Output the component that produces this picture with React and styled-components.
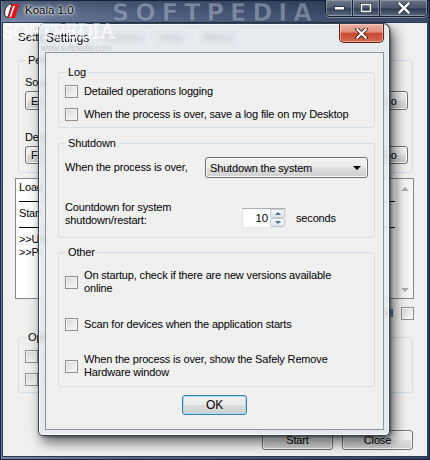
import React from "react";
import styled, { createGlobalStyle } from "styled-components";

const GlobalStyle = createGlobalStyle`
  html, body {
    margin: 0;
    padding: 0;
  }
  body {
    width: 430px;
    height: 460px;
    overflow: hidden;
    background: #1d2a40;
    font-family: "Liberation Sans", Arial, sans-serif;
    font-size: 11px;
    letter-spacing: -0.16px;
    color: #000;
  }
`;

const Desktop = styled.div`
  position: relative;
  width: 430px;
  height: 460px;
  overflow: hidden;
`;

/* ---------- main (background) window ---------- */

const MainWindow = styled.div`
  width: 430px;
  height: 460px;
  box-sizing: border-box;
  display: flex;
  flex-direction: column;
  border: 1px solid #16213a;
  padding: 0 1px 2px 1px;
  background: linear-gradient(90deg, #72829f 0%, #56678a 30%, #3f5072 70%, #31405c 100%);
`;

const TitleBar = styled.div`
  height: 21px;
  display: flex;
  align-items: flex-start;
  position: relative;
  background: linear-gradient(180deg, rgba(20, 30, 50, 0.35) 0%, rgba(255, 255, 255, 0.05) 100%);
`;

const AppIcon = styled.svg`
  width: 18px;
  height: 18px;
  margin: 1px 0 0 1px;
  flex-shrink: 0;
`;

const TitleText = styled.span`
  font-size: 11.5px;
  letter-spacing: 0;
  line-height: 18px;
  margin-left: 4px;
  color: #000;
  text-shadow: 0 0 6px #fff, 0 0 3px #fff, 0 0 2px #fff;
`;

const CaptionGroup = styled.div`
  margin-left: auto;
  margin-top: -1px;
  display: flex;
  height: 16px;
  border: 1px solid rgba(20, 28, 45, 0.9);
  border-top: none;
  border-radius: 0 0 5px 5px;
  overflow: hidden;
  box-shadow: 0 1px 0 rgba(255, 255, 255, 0.35);
  z-index: 1;
`;

const CaptionBtn = styled.div`
  width: ${(p) => p.$w}px;
  display: flex;
  align-items: center;
  justify-content: center;
  background: linear-gradient(180deg, rgba(255, 255, 255, 0.32) 0%, rgba(255, 255, 255, 0.12) 50%, rgba(0, 0, 0, 0.08) 55%, rgba(255, 255, 255, 0.18) 100%);
  box-shadow: inset 0 0 0 1px rgba(255, 255, 255, 0.3);
  & + & {
    border-left: 1px solid rgba(20, 28, 45, 0.9);
  }
`;

const Client = styled.div`
  flex: 1;
  display: flex;
  flex-direction: column;
  background: #f0f0f0;
  border: 1px solid #2a3a57;
  min-height: 0;
`;

const MenuBar = styled.div`
  height: 28px;
  display: flex;
  align-items: center;
  padding-left: 15px;
  font-size: 11.5px;
  letter-spacing: 0;
`;

const MenuItem = styled.span`
  margin-left: ${(p) => p.$ml || 0}px;
`;

const Content = styled.div`
  display: flex;
  flex-direction: column;
  padding: 0 13px 0 12px;
`;

const Group = styled.fieldset`
  margin: ${(p) => p.$mt || 0}px ${(p) => (p.$inset ? "1px" : "8px")} 0 ${(p) => (p.$inset ? "3px" : "12px")};
  padding: 0 ${(p) => p.$pr || 6}px 0 6px;
  height: ${(p) => p.$h}px;
  box-sizing: border-box;
  border: 1px solid #d5dfe5;
  border-radius: 3px;
  min-width: 0;
  display: flex;
  flex-direction: column;
`;

const Legend = styled.legend`
  padding: 0 2px;
  margin-left: 1px;
  font-size: 11px;
  line-height: 12px;
  color: #000;
`;

const FieldLabel = styled.div`
  line-height: 12px;
  margin-top: ${(p) => p.$mt}px;
  white-space: nowrap;
`;

const PathRow = styled.div`
  display: flex;
  gap: 7px;
  margin-top: 3px;
`;

const WinButton = styled.div`
  box-sizing: border-box;
  height: ${(p) => p.$h || 20}px;
  width: ${(p) => (p.$w ? `${p.$w}px` : "auto")};
  flex: ${(p) => (p.$grow ? 1 : "none")};
  display: flex;
  align-items: center;
  justify-content: ${(p) => (p.$left ? "flex-start" : "center")};
  padding: 0 5px;
  border: 1px solid ${(p) => (p.$default ? "#3c7fb1" : "#707070")};
  border-radius: 3px;
  background: linear-gradient(180deg, #f2f2f2 0%, #ebebeb 48%, #dddddd 52%, #cfcfcf 100%);
  box-shadow: inset 0 0 0 1px ${(p) => (p.$default ? "#a6dcf7" : "#fbfbfb")};
  font-size: ${(p) => p.$fs || 11}px;
  white-space: nowrap;
  overflow: hidden;
`;

const ListBox = styled.div`
  margin-top: 5px;
  height: 121px;
  box-sizing: border-box;
  border: 1px solid #828790;
  background: #fff;
  display: flex;
`;

const ListLines = styled.div`
  flex: 1;
  padding: 2px 0 0 3px;
  display: flex;
  flex-direction: column;
`;

const ListLine = styled.div`
  height: 13px;
  line-height: 13px;
  white-space: nowrap;
`;

const ListRule = styled.div`
  height: 7px;
  border-bottom: 1px solid #000;
  margin-bottom: 5px;
`;

const ScrollBar = styled.div`
  width: 17px;
  display: flex;
  flex-direction: column;
  justify-content: space-between;
  align-items: center;
  padding: 8px 0 6px;
  background: linear-gradient(90deg, #e3e3e3 0%, #f3f3f3 40%, #f6f6f6 100%);
  border-left: 1px solid #ececec;
`;

const ScrollArrow = styled.div`
  width: 0;
  height: 0;
  border-left: 4px solid transparent;
  border-right: 4px solid transparent;
  ${(p) => (p.$down ? "border-top: 4px solid #a9a9a9;" : "border-bottom: 4px solid #a9a9a9;")}
`;

const CheckRow = styled.label`
  display: flex;
  align-items: center;
  gap: ${(p) => p.$gap || 6}px;
  margin-top: ${(p) => p.$mt || 0}px;
  align-self: ${(p) => (p.$end ? "flex-end" : "stretch")};
  line-height: 13px;
`;

const Check = styled.span`
  width: 13px;
  height: 13px;
  box-sizing: border-box;
  flex-shrink: 0;
  border: 1px solid #8e8f8f;
  background: linear-gradient(135deg, #d6d6d6 0%, #e9e9e9 50%, #fbfbfb 100%);
  box-shadow: inset 0 0 0 1px #f4f4f4;
`;

const BottomButtons = styled.div`
  display: flex;
  justify-content: flex-end;
  gap: 9px;
  margin: 37px 1px 0 0;
`;

/* ---------- Settings dialog ---------- */

const Dialog = styled.div`
  position: absolute;
  left: 38px;
  top: 23px;
  width: 352px;
  height: 413px;
  box-sizing: border-box;
  display: flex;
  flex-direction: column;
  border: 1px solid rgba(35, 45, 62, 0.9);
  border-radius: 7px 7px 5px 5px;
  background: rgba(228, 232, 238, 0.82);
  backdrop-filter: blur(2.5px);
  box-shadow: inset 0 0 0 1px rgba(255, 255, 255, 0.75), 4px 6px 13px rgba(0, 0, 0, 0.62), 1px 1px 3px rgba(0, 0, 0, 0.4);
`;

const DialogTitleRow = styled.div`
  height: 28px;
  display: flex;
  align-items: flex-start;
`;

const DialogTitle = styled.span`
  margin: 7px 0 0 7px;
  font-size: 12px;
  letter-spacing: 0;
  line-height: 14px;
  text-shadow: 0 0 5px rgba(255, 255, 255, 0.9);
`;

const RedClose = styled.div`
  margin: 0 5px 0 auto;
  width: 45px;
  height: 19px;
  box-sizing: border-box;
  display: flex;
  align-items: center;
  justify-content: center;
  border: 1px solid #5e2219;
  border-top: none;
  border-radius: 0 0 5px 5px;
  background: linear-gradient(180deg, #eab0a1 0%, #df8f7b 45%, #c9472f 52%, #d26a52 100%);
  box-shadow: inset 0 0 0 1px rgba(255, 240, 235, 0.45);
`;

const DialogClient = styled.div`
  flex: 1;
  margin: 0 5px 5px 6px;
  background: #f0f0f0;
  border: 1px solid #8d949d;
  display: flex;
  flex-direction: column;
  padding-top: 13px;
`;

const ShutRow = styled.div`
  display: flex;
  align-items: ${(p) => p.$align || "center"};
  margin-top: ${(p) => p.$mt || 0}px;
`;

const RowText = styled.div`
  width: ${(p) => p.$w}px;
  line-height: 13px;
  flex-shrink: 0;
  white-space: nowrap;
`;

const ComboBox = styled.div`
  width: 163px;
  height: 21px;
  box-sizing: border-box;
  display: flex;
  align-items: center;
  justify-content: space-between;
  padding: 0 6px 0 4px;
  border: 1px solid #707070;
  border-radius: 3px;
  background: linear-gradient(180deg, #f2f2f2 0%, #ebebeb 48%, #dddddd 52%, #cfcfcf 100%);
  box-shadow: inset 0 0 0 1px #fbfbfb;
`;

const ComboArrow = styled.span`
  width: 0;
  height: 0;
  border-left: 4px solid transparent;
  border-right: 4px solid transparent;
  border-top: 4px solid #000;
`;

const Spinner = styled.div`
  width: 44px;
  height: 20px;
  box-sizing: border-box;
  margin-top: 7px;
  display: flex;
  border: 1px solid #abadb3;
  border-color: #abadb3 #e3e9ef #e3e9ef #e2e3ea;
  background: #fff;
`;

const SpinValue = styled.div`
  flex: 1;
  text-align: right;
  padding-right: 2px;
  font-size: 11.5px;
  line-height: 18px;
`;

const SpinButtons = styled.div`
  width: 15px;
  display: flex;
  flex-direction: column;
`;

const SpinBtn = styled.div`
  flex: 1;
  display: flex;
  align-items: center;
  justify-content: center;
  border: 1px solid #c5cbd3;
  border-radius: 2px;
  background: linear-gradient(180deg, #f6f8fa 0%, #e2e6eb 100%);
`;

const SpinArrow = styled.span`
  width: 0;
  height: 0;
  border-left: 3px solid transparent;
  border-right: 3px solid transparent;
  ${(p) => (p.$down ? "border-top: 3px solid #4e6a90;" : "border-bottom: 3px solid #4e6a90;")}
`;

const SecondsText = styled.span`
  margin: 7px 0 0 10px;
  line-height: 20px;
`;

const OkRow = styled.div`
  display: flex;
  justify-content: center;
  margin-top: 8px;
`;

/* ---------- watermarks ---------- */

const BigMark = styled.div`
  position: absolute;
  left: 110px;
  top: 0;
  font-family: "DejaVu Sans", sans-serif;
  font-weight: bold;
  font-size: 24px;
  line-height: 24px;
  letter-spacing: 6px;
  color: rgba(205, 214, 230, 0.42);
  -webkit-text-stroke: 1px rgba(40, 55, 85, 0.35);
  pointer-events: none;
`;

const SerifMark = styled.div`
  position: absolute;
  left: 2px;
  top: 19px;
  font-family: "Liberation Serif", serif;
  font-size: 21px;
  letter-spacing: 0;
  color: rgba(255, 255, 255, 0.25);
  -webkit-text-stroke: 0.8px rgba(255, 255, 255, 0.85);
  pointer-events: none;
`;

const UrlMark = styled.div`
  position: absolute;
  left: 41px;
  top: 43px;
  font-family: "Liberation Sans", sans-serif;
  font-size: 8.5px;
  letter-spacing: -0.2px;
  color: rgba(170, 170, 170, 0.55);
  filter: blur(0.3px);
  pointer-events: none;
`;

function KoalaIcon() {
  return (
    <AppIcon viewBox="0 0 18 18">
      <path d="M3 15 C0 12 2 4 7 2 L9 2 L5 15 Z" fill="#fff" stroke="#111" strokeWidth="0.9" />
      <path d="M9 2 L16 2 L12 16 L5 16 Z" fill="#e3141b" />
      <path d="M10 4 L12 4 L8 15 L6.5 15 Z" fill="#fff" opacity="0.9" />
    </AppIcon>
  );
}

function CloseGlyph({ size = 12, outline = "#3a1812" }) {
  return (
    <svg width={size} height={size - 2} viewBox="0 0 12 10">
      <path d="M2 1 L10 9 M10 1 L2 9" stroke={outline} strokeWidth="3.6" strokeLinecap="round" />
      <path d="M2 1 L10 9 M10 1 L2 9" stroke="#fff" strokeWidth="2" strokeLinecap="round" />
    </svg>
  );
}

export default function App() {
  return (
    <Desktop>
      <GlobalStyle />
      <MainWindow>
        <TitleBar>
          <KoalaIcon />
          <TitleText>Koala 1.0</TitleText>
          <BigMark>SOFTPEDIA</BigMark>
          <CaptionGroup>
            <CaptionBtn $w={26}>
              <svg width="11" height="5" viewBox="0 0 11 5">
                <rect x="0.5" y="0.5" width="10" height="3.5" fill="#fff" stroke="#2b3650" strokeWidth="1" />
              </svg>
            </CaptionBtn>
            <CaptionBtn $w={26}>
              <svg width="12" height="10" viewBox="0 0 12 10">
                <rect x="0.5" y="0.5" width="11" height="9" fill="none" stroke="#2b3650" strokeWidth="1" />
                <rect x="1.5" y="1.5" width="9" height="7" fill="none" stroke="#fff" strokeWidth="1.4" />
              </svg>
            </CaptionBtn>
            <CaptionBtn $w={47}>
              <CloseGlyph size={14} outline="#2b3650" />
            </CaptionBtn>
          </CaptionGroup>
        </TitleBar>

        <Client>
          <MenuBar>
            <MenuItem>Settings</MenuItem>
            <MenuItem $ml={43}>Options</MenuItem>
            <MenuItem $ml={17}>Help</MenuItem>
            <MenuItem $ml={20}>About</MenuItem>
          </MenuBar>

          <Content>
            <Group $inset $mt={3} $h={119} $pr={4}>
              <Legend>Pen drive</Legend>
              <FieldLabel $mt={10}>Source</FieldLabel>
              <PathRow>
                <WinButton $grow $left $h={19}>E:\</WinButton>
                <WinButton $w={37} $h={19}>Go</WinButton>
              </PathRow>
              <FieldLabel $mt={21}>Dest</FieldLabel>
              <PathRow>
                <WinButton $grow $left $h={18}>F:\</WinButton>
                <WinButton $w={37} $h={18}>Go</WinButton>
              </PathRow>
            </Group>

            <ListBox>
              <ListLines>
                <ListLine>Load</ListLine>
                <ListRule />
                <ListLine>Start</ListLine>
                <ListRule />
                <ListLine>&gt;&gt;USB</ListLine>
                <ListLine>&gt;&gt;Pr</ListLine>
              </ListLines>
              <ScrollBar>
                <ScrollArrow />
                <ScrollArrow $down />
              </ScrollBar>
            </ListBox>

            <CheckRow $end $mt={8} $gap={8}>
              Auto scroll
              <Check />
            </CheckRow>

            <Group $inset $mt={11} $h={62}>
              <Legend>Options</Legend>
              <CheckRow $mt={7}>
                <Check />
                Backup
              </CheckRow>
              <CheckRow $mt={10}>
                <Check />
                Verify
              </CheckRow>
            </Group>

            <BottomButtons>
              <WinButton $w={71}>Start</WinButton>
              <WinButton $w={71}>Close</WinButton>
            </BottomButtons>
          </Content>
        </Client>
      </MainWindow>

      <Dialog>
        <DialogTitleRow>
          <DialogTitle>Settings</DialogTitle>
          <RedClose>
            <CloseGlyph size={13} />
          </RedClose>
        </DialogTitleRow>
        <DialogClient>
          <Group $h={62}>
            <Legend>Log</Legend>
            <CheckRow $mt={7}>
              <Check />
              Detailed operations logging
            </CheckRow>
            <CheckRow $mt={10}>
              <Check />
              When the process is over, save a log file on my Desktop
            </CheckRow>
          </Group>

          <Group $mt={9} $h={101}>
            <Legend>Shutdown</Legend>
            <ShutRow $mt={8}>
              <RowText $w={140}>When the process is over,</RowText>
              <ComboBox>
                Shutdown the system
                <ComboArrow />
              </ComboBox>
            </ShutRow>
            <ShutRow $mt={23} $align="flex-start">
              <RowText $w={177}>
                Countdown for system
                <br />
                shutdown/restart:
              </RowText>
              <Spinner>
                <SpinValue>10</SpinValue>
                <SpinButtons>
                  <SpinBtn>
                    <SpinArrow />
                  </SpinBtn>
                  <SpinBtn>
                    <SpinArrow $down />
                  </SpinBtn>
                </SpinButtons>
              </Spinner>
              <SecondsText>seconds</SecondsText>
            </ShutRow>
          </Group>

          <Group $mt={8} $h={141}>
            <Legend>Other</Legend>
            <CheckRow $mt={11}>
              <Check />
              <span>
                On startup, check if there are new versions available
                <br />
                online
              </span>
            </CheckRow>
            <CheckRow $mt={23}>
              <Check />
              Scan for devices when the application starts
            </CheckRow>
            <CheckRow $mt={22}>
              <Check />
              <span>
                When the process is over, show the Safely Remove
                <br />
                Hardware window
              </span>
            </CheckRow>
          </Group>

          <OkRow>
            <WinButton $default $w={65} $fs={12}>OK</WinButton>
          </OkRow>
        </DialogClient>
      </Dialog>

      <SerifMark>SOFTPEDIA</SerifMark>
      <UrlMark>www.softpedia.com</UrlMark>
    </Desktop>
  );
}
